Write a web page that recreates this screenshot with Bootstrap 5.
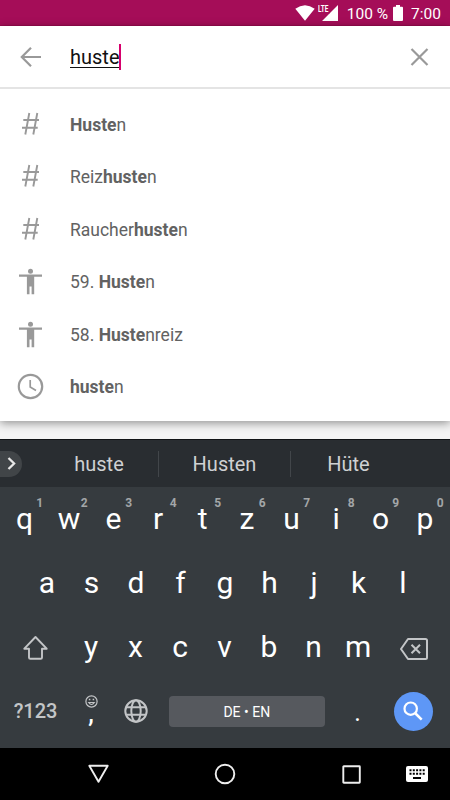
<!DOCTYPE html>
<html lang="de">
<head>
<meta charset="utf-8">
<meta name="viewport" content="width=device-width, initial-scale=1">
<title>Suche</title>
<link href="https://cdn.jsdelivr.net/npm/bootstrap@5.3.0/dist/css/bootstrap.min.css" rel="stylesheet">
<style>
body{font-family:Roboto,"Liberation Sans",sans-serif;width:450px;height:800px;overflow:hidden;background:#f4f4f4}
svg{display:block;flex:none}
.status{height:26px;background:#a50d58;border-bottom:1px solid #980a4e;color:#fff;font-size:15.5px;line-height:27px;padding-right:9px}
.status>span{padding-top:3px}
.signal{width:19px;height:16px;margin:0 9px 0 4px}
.battery{margin:0 8px 0 5px}
.lte{left:-1px;top:0;font-size:9.5px;line-height:8px;font-weight:700;transform:scaleX(.68);transform-origin:0 0}
.panel{height:395px;box-shadow:0 2px 9px rgba(0,0,0,.42);z-index:1}
.searchbar{height:63px;border-bottom:2px solid #e4e4e4;padding:0 21px 0 20px}
.query{font-size:20px;line-height:24px;color:#111;margin-left:29px}
.query span{border-bottom:1px solid #111;display:block;height:22px;line-height:23px;width:49px}
.caret{width:2px;height:26px;background:#d6006c}
.hits{padding-top:9.5px}
.hit{height:52.5px;padding-left:18px;font-size:17.5px;color:#626262}
.hit svg{margin-right:27px}
.hit b{font-weight:700}
.kb{margin-top:18px;height:309px;background:#363b3f;color:#fff}
.strip{height:48px;background:#292d31;border-top:1px solid #111416;color:#cfd1d3;font-size:20px}
.chip{width:22px;height:26px;background:#414548;border-radius:0 13px 13px 0;margin-right:18px;padding-left:6px}
.sugg{height:26px;line-height:27px;text-align:center}
.sugg+.sugg{border-left:1px solid #42464a}
.keys{height:64px;padding:0 2.3px}
.key{width:44.5px;height:64px;line-height:64px;font-size:30px;text-align:center}
.wide{width:66.5px}
.key sup{left:34px;top:10px;font-size:12px;line-height:12px;font-weight:700;color:#a3a6a8}
.sym{font-size:20px;font-weight:500;color:#c3c5c7;line-height:65px}
.space{width:156px;height:31px;margin:0 10.5px 0 11px;border-radius:4px;background:#56595e;font-size:14px;line-height:32px}
.smile{margin-top:16px}
.comma{font-size:25px;line-height:11px;font-weight:500}
.period{font-size:25px;line-height:68px}
.go{width:39px;height:39px;background:#5e97f6}
.sysnav{height:52px;background:#000;padding-left:87px}
.nav-home{margin-left:104px}
.nav-recent{margin-left:106px}
.nav-ime{margin-left:45px}
</style>
<script src="https://cdn.jsdelivr.net/npm/bootstrap@5.3.0/dist/js/bootstrap.bundle.min.js"></script>
</head>
<body class="m-0">
<svg width="0" height="0" class="position-absolute">
<defs>
<g id="hash" fill="none" stroke="#999" stroke-width="1.9"><path d="M11.300 1 7.300 22.500M19.300 1l-4 21.500M5.300 8H21M4 15.700H19.700"/></g>
<g id="man" fill="#999"><circle cx="12.500" cy="2.300" r="2.500"/><path d="M1 5.600H24V7.800H16.200V25.300H13.600V17.500H11.500V25.300H8.900V7.800H1Z"/></g>
</defs>
</svg>

<header class="status d-flex align-items-center justify-content-end">
  <svg width="20" height="16" viewBox="0 0 20 16"><path d="M.3 3.700Q10-3.300 19.700 3.700L10 15.800Z" fill="#fff"/></svg>
  <div class="signal position-relative">
    <svg width="19" height="16" viewBox="0 0 19 16"><path d="M19 0V16H3L10.500 8.500H11V8Z" fill="#fff"/></svg>
    <span class="lte position-absolute">LTE</span>
  </div>
  <span>100 %</span>
  <svg width="10" height="16" viewBox="0 0 10 16" class="battery"><path d="M3 0H7V1.700H9Q10 1.700 10 2.700V15Q10 16 9 16H1Q0 16 0 15V2.700Q0 1.700 1 1.700H3Z" fill="#fff"/></svg>
  <span>7:00</span>
</header>

<main class="panel bg-white position-relative">
  <div class="searchbar d-flex align-items-center">
    <svg width="21" height="20" viewBox="0 0 21 20" fill="none" stroke="#999" stroke-width="2.200"><path d="M21 10H2M11 .8 1.800 10 11 19.200"/></svg>
    <div class="query d-flex align-items-center"><span>huste</span><i class="caret"></i></div>
    <svg class="ms-auto" width="19" height="18" viewBox="0 0 19 18" fill="none" stroke="#999" stroke-width="2.200"><path d="m1.500 1 16 16M17.500 1l-16 16"/></svg>
  </div>
  <div class="hits">
    <div class="hit d-flex align-items-center"><svg width="25" height="26"><use href="#hash"/></svg><span><b>Huste</b>n</span></div>
    <div class="hit d-flex align-items-center"><svg width="25" height="26"><use href="#hash"/></svg><span>Reiz<b>huste</b>n</span></div>
    <div class="hit d-flex align-items-center"><svg width="25" height="26"><use href="#hash"/></svg><span>Raucher<b>huste</b>n</span></div>
    <div class="hit d-flex align-items-center"><svg width="25" height="26" overflow="visible"><use href="#man"/></svg><span>59. <b>Huste</b>n</span></div>
    <div class="hit d-flex align-items-center"><svg width="25" height="26" overflow="visible"><use href="#man"/></svg><span>58. <b>Huste</b>nreiz</span></div>
    <div class="hit d-flex align-items-center"><svg width="25" height="26" viewBox="0 0 25 26" overflow="visible" fill="none" stroke="#999"><circle cx="12.500" cy="12.500" r="11.700" stroke-width="2.200"/><path d="M12.200 6V13L18 16.500" stroke-width="1.700"/></svg><span><b>huste</b>n</span></div>
  </div>
</main>

<section class="kb">
  <div class="strip d-flex align-items-center">
    <div class="chip d-flex align-items-center"><svg width="10" height="14" viewBox="0 0 10 14"><path d="m2.500 1 5.600 5.500L2.500 12" fill="none" stroke="#e8e8e8" stroke-width="2.300"/></svg></div>
    <div class="sugg" style="width:118px">huste</div>
    <div class="sugg" style="width:132px">Husten</div>
    <div class="sugg" style="width:116px">Hüte</div>
  </div>
  <div class="keys d-flex">
    <div class="key position-relative">q<sup class="position-absolute">1</sup></div>
    <div class="key position-relative">w<sup class="position-absolute">2</sup></div>
    <div class="key position-relative">e<sup class="position-absolute">3</sup></div>
    <div class="key position-relative">r<sup class="position-absolute">4</sup></div>
    <div class="key position-relative">t<sup class="position-absolute">5</sup></div>
    <div class="key position-relative">z<sup class="position-absolute">6</sup></div>
    <div class="key position-relative">u<sup class="position-absolute">7</sup></div>
    <div class="key position-relative">i<sup class="position-absolute">8</sup></div>
    <div class="key position-relative">o<sup class="position-absolute">9</sup></div>
    <div class="key position-relative">p<sup class="position-absolute">0</sup></div>
  </div>
  <div class="keys d-flex justify-content-center">
    <div class="key">a</div><div class="key">s</div><div class="key">d</div><div class="key">f</div><div class="key">g</div><div class="key">h</div><div class="key">j</div><div class="key">k</div><div class="key">l</div>
  </div>
  <div class="keys d-flex">
    <div class="key wide d-flex align-items-center justify-content-center"><svg width="26" height="25" viewBox="0.500 0 26 25"><path d="M13 2 24.200 13.700H19.500V22.500Q19.500 23.800 18.200 23.800H7.800Q6.500 23.800 6.500 22.500V13.700H1.800Z" fill="none" stroke="#c3c5c7" stroke-width="1.900" stroke-linejoin="round"/></svg></div>
    <div class="key">y</div><div class="key">x</div><div class="key">c</div><div class="key">v</div><div class="key">b</div><div class="key">n</div><div class="key">m</div>
    <div class="key wide d-flex align-items-center justify-content-center"><svg width="28" height="22" viewBox="0 0 28 22" class="mt-1" fill="none" stroke="#c3c5c7" stroke-width="2" stroke-linejoin="round"><path d="M8 1H25.500Q27 1 27 2.500V19.500Q27 21 25.500 21H8L1 11Z"/><path d="m11.500 6.700 8.500 8.500M20 6.700 11.500 15.200"/></svg></div>
  </div>
  <div class="keys d-flex align-items-center">
    <div class="key wide sym">?123</div>
    <div class="key d-flex flex-column align-items-center">
      <svg class="smile" width="13" height="13" viewBox="0 0 13 13" fill="none" stroke="#c3c5c7" stroke-width="1.200"><circle cx="6.500" cy="6.500" r="5.600"/><path d="M3.700 7.500Q6.500 11.500 9.300 7.500Z"/><path d="M4.600 3.800v1.500M8.400 3.800v1.500" stroke-width="1.500"/></svg>
      <span class="comma">,</span>
    </div>
    <div class="key d-flex align-items-center justify-content-center"><svg width="24" height="24" viewBox="0 0 24 24" fill="none" stroke="#c3c5c7" stroke-width="2"><circle cx="12" cy="12" r="10.700"/><ellipse cx="12" cy="12" rx="4.700" ry="10.700"/><path d="M2.500 8.200H21.500M2.500 15.800H21.500"/></svg></div>
    <div class="space text-center">DE • EN</div>
    <div class="key period">.</div>
    <div class="key wide d-flex align-items-center justify-content-center"><div class="go rounded-circle d-flex align-items-center justify-content-center"><svg width="20" height="20" viewBox="0 0 20 20" fill="none" stroke="#fff"><circle cx="7.700" cy="7.700" r="6.200" stroke-width="2.200"/><path d="m12 12 6.700 6.700" stroke-width="2.500"/></svg></div></div>
  </div>
</section>

<nav class="sysnav d-flex align-items-center">
  <svg width="23" height="20" viewBox="0 0 23 20"><path d="M2.300 1.800H20.700L11.500 17.800Z" fill="none" stroke="#eee" stroke-width="1.900" stroke-linejoin="round"/></svg>
  <svg class="nav-home" width="22" height="22" viewBox="0 0 22 22"><circle cx="11" cy="11" r="9.300" fill="none" stroke="#eee" stroke-width="1.900"/></svg>
  <svg class="nav-recent" width="19" height="19" viewBox="0 0 19 19"><rect x="1.300" y="1.300" width="16.500" height="16.500" rx=".5" fill="none" stroke="#eee" stroke-width="1.900"/></svg>
  <svg class="nav-ime" width="22" height="16" viewBox="0 0 22 16"><rect width="22" height="16" rx="2" fill="#fff"/><path d="M3.500 4.200H19M3.500 7.800H19" stroke="#000" stroke-width="2" stroke-dasharray="2 1.300"/><path d="M7 12H15" stroke="#000" stroke-width="2"/></svg>
</nav>
</body>
</html>
